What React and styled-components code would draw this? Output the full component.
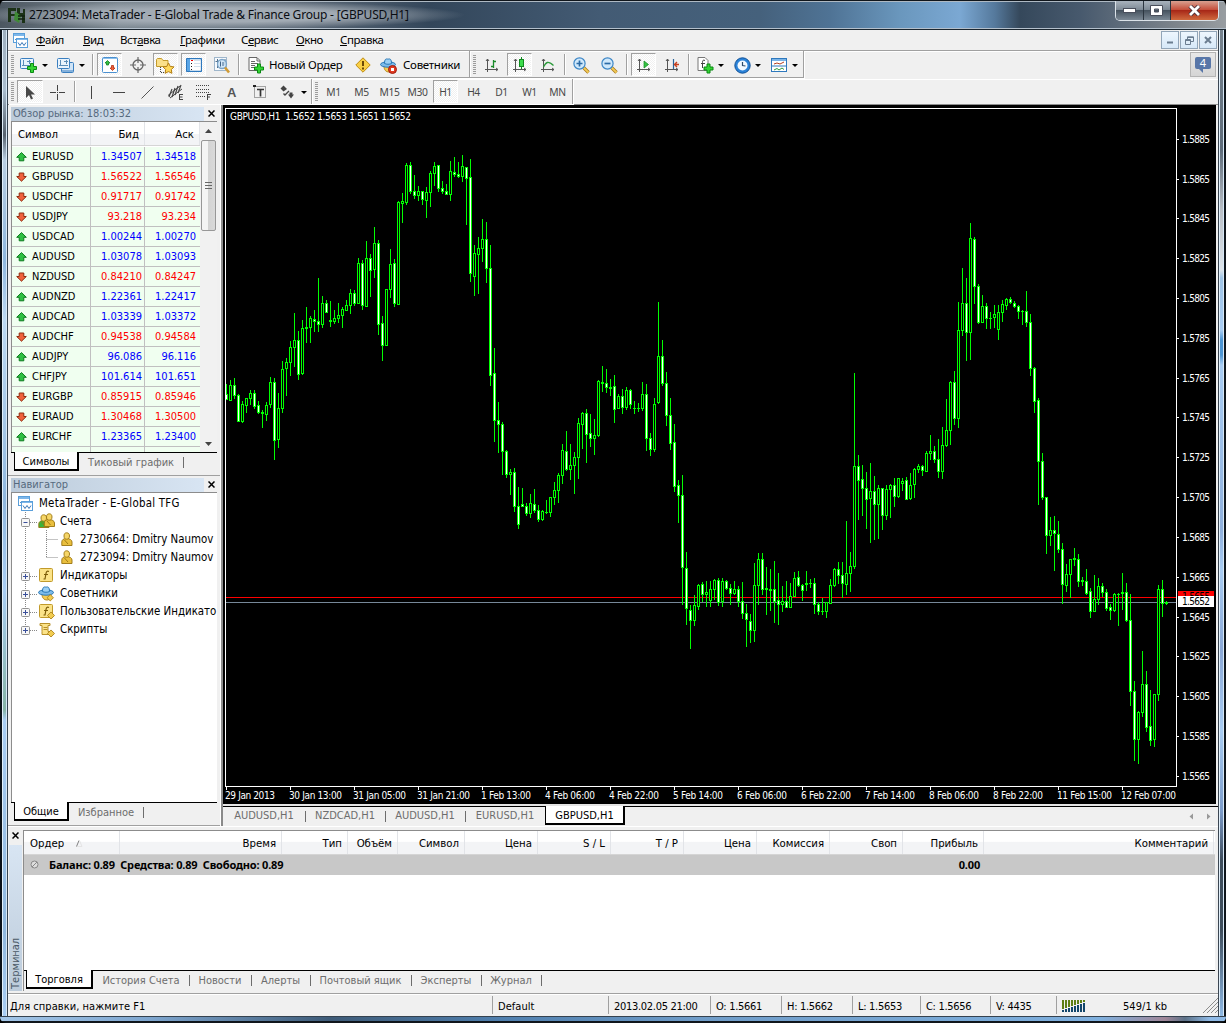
import styled, { createGlobalStyle } from 'styled-components';

const ui = '"DejaVu Sans Condensed", "Noto Sans", sans-serif';
const segoe = '"Noto Sans", "Open Sans", sans-serif';

const GlobalStyle = createGlobalStyle`
    * { box-sizing: border-box; }
    html, body { margin: 0; padding: 0; background: #000; overflow: hidden; }
    body { font-family: ${ui}; font-size: 11px; color: #000; line-height: 1; white-space: nowrap; }
    svg { display: block; flex: none; }
`;

/* ---------- data ---------- */

const quotes = [
    ['EURUSD', '1.34507', '1.34518', true],
    ['GBPUSD', '1.56522', '1.56546', false],
    ['USDCHF', '0.91717', '0.91742', false],
    ['USDJPY', '93.218', '93.234', false],
    ['USDCAD', '1.00244', '1.00270', true],
    ['AUDUSD', '1.03078', '1.03093', true],
    ['NZDUSD', '0.84210', '0.84247', false],
    ['AUDNZD', '1.22361', '1.22417', true],
    ['AUDCAD', '1.03339', '1.03372', true],
    ['AUDCHF', '0.94538', '0.94584', false],
    ['AUDJPY', '96.086', '96.116', true],
    ['CHFJPY', '101.614', '101.651', true],
    ['EURGBP', '0.85915', '0.85946', false],
    ['EURAUD', '1.30468', '1.30500', false],
    ['EURCHF', '1.23365', '1.23400', true],
];

// candles: high, body top, body bottom, low (thirds of a pixel from base), w = bearish
const series = [
    { base: 150, bars: `702,732,750,750w 690,705,753,753 684,705,738,747w 732,735,816,816w 753,762,816,819 744,744,768,789
720,729,747,765 720,729,771,777w 753,765,789,792w 780,786,792,834 756,765,795,813 681,696,765,774 684,696,873,930w
729,774,870,894 633,657,777,789 624,636,657,738 573,591,639,678 489,570,594,651 543,570,675,690w 510,534,672,675
471,531,537,579 498,504,534,579 480,507,516,546w 384,513,525,546w 438,459,525,534 450,459,489,489w 453,510,516,531
480,504,516,522 459,495,507,519 471,477,498,534 450,465,483,483 417,429,468,492 420,429,462,468w 324,339,462,462
330,339,468,480w 273,324,471,471 312,324,363,441w 231,279,360,384 270,279,525,555w 498,519,588,633w 417,417,588,588
297,342,420,444 327,339,462,471w 153,156,465,465 129,153,162,219 39,45,159,165 36,45,126,132w 75,123,138,147w
108,123,138,153 123,123,150,165w 111,126,153,204 63,69,129,171 36,48,72,108 45,45,117,126w 93,114,126,132w
102,123,135,135w 33,63,135,153 21,66,75,81w 36,72,81,84w 15,48,81,96 51,51,87,225w 27,81,372,396w 285,309,381,438
261,294,315,432 207,267,297,336 216,267,357,399w 285,354,678,708w 594,669,813,876w 756,810,825,909w` },
    { base: 290, bars: `396,402,486,555w 480,483,555,564w 537,546,555,615 534,546,651,666w 591,648,705,717w 594,642,651,651w
639,648,672,678w 612,639,672,684 597,642,663,669w 645,660,690,696w 660,663,690,693 630,666,669,672 621,621,669,681
576,600,624,645 549,555,603,639 462,480,558,582 423,483,540,543w 462,525,540,570 486,501,528,612 384,399,504,567
366,369,405,477 357,369,435,519w 372,429,447,471w 387,435,447,495 270,273,438,441 228,276,282,306 237,279,294,309w
267,291,297,318 255,288,360,399w 312,318,357,357 297,318,354,372w 291,300,354,360 297,300,345,357w 333,354,357,372
339,354,357,366 276,312,357,363 282,312,447,483w 429,444,480,498w 324,342,480,486 36,198,339,342 150,198,282,288w
246,279,378,408w 324,375,462,480w 402,456,591,606w 570,585,618,699w 555,615,834,945w 786,834,957,1005w
945,960,993,1077w 915,945,993,1008 882,885,951,960 876,882,915,936w 873,906,915,951 873,897,933,951 867,870,900,930
864,870,939,948w 864,873,936,951 870,873,897,900w 882,894,912,945w 873,897,912,915 888,897,936,951w 876,933,972,987w
942,969,990,1071w 972,993,1023,1059w 819,885,1023,1056` },
    { base: 360, bars: `579,597,678,735 579,597,690,705w 621,684,690,765 627,687,693,753 603,687,726,789w 639,720,735,795w
678,723,735,756 663,723,744,744w 669,708,744,744 636,654,711,711 633,651,678,681w 672,675,693,723w 633,669,675,693
657,669,672,684 654,669,735,762w 726,732,756,765w 714,753,756,765 726,726,756,774 657,675,732,732 624,627,678,681
606,627,648,672w 606,645,672,714w 483,639,675,705 576,618,642,696 39,318,621,627 285,318,363,480w 315,357,387,468w
336,384,420,507w 309,393,417,549 348,393,435,540w 375,384,435,537 384,384,468,510w 375,387,468,480 372,375,390,474
354,375,411,441w 354,354,411,414 354,363,372,393 351,360,420,420w 339,375,417,420 324,327,375,414 312,318,330,339
315,318,333,348w 273,279,336,336 225,273,282,300 258,273,300,309w 237,297,336,354w 201,255,336,357 117,210,258,261
63,66,213,255 33,66,177,195w` },
    { base: 210, bars: `276,360,627,654 174,279,363,378 204,279,369,453w 39,84,369,450 81,87,231,282w 222,228,339,342w
255,288,339,339 279,288,327,357w 306,324,327,357 285,312,324,354 285,306,360,390 270,282,309,336 264,267,288,300
261,267,279,282w 273,279,291,294w 285,288,306,327w 300,303,306,345 243,303,339,351w 312,336,477,498w 471,474,576,609w
564,570,756,885w 729,753,864,870w 861,861,978,1032w 921,960,978,1008 918,960,972,1083w 933,972,1020,1029w` },
    { base: 520, bars: `69,87,195,252w 132,162,198,216 117,117,165,234 84,114,120,138 102,117,186,201w 171,180,186,198
147,183,222,225w 204,213,276,294w 165,237,276,276 174,198,240,255 189,198,219,231w 207,216,267,273w 252,261,273,300w
219,222,273,276 219,222,225,318 159,216,222,270 189,216,303,306w 222,300,516,558w 483,513,660,723w 573,576,660,732
393,492,579,591 453,492,624,636w 510,618,663,678w 522,522,660,681 195,207,525,543 180,207,252,291w 243,246,252,255` },
];

const candles = series.flatMap(({ base, bars }) =>
    bars.split(/\s+/).map((bar) => {
        const [high, top, bottom, low] = bar.replace('w', '').split(',').map((v) => base + Math.round(v / 3));
        return { high, top, bottom, low, bear: bar.endsWith('w') };
    })
);

const prices = ['1.5885', '1.5865', '1.5845', '1.5825', '1.5805', '1.5785', '1.5765', '1.5745', '1.5725',
    '1.5705', '1.5685', '1.5665', '1.5645', '1.5625', '1.5605', '1.5585', '1.5565'];

const times = [['29 Jan 2013', 50], ['30 Jan 13:00', 53], ['31 Jan 05:00', 53], ['31 Jan 21:00', 53], ['1 Feb 13:00', 50],
    ['4 Feb 06:00', 50], ['4 Feb 22:00', 50], ['5 Feb 14:00', 50], ['6 Feb 06:00', 50], ['6 Feb 22:00', 50],
    ['7 Feb 14:00', 50], ['8 Feb 06:00', 50], ['8 Feb 22:00', 50], ['11 Feb 15:00', 55], ['12 Feb 07:00', 55]];

const columns = [['Ордер', 96], ['Время', 162], ['Тип', 66], ['Объём', 50], ['Символ', 67], ['Цена', 73], ['S / L', 73],
    ['T / P', 73], ['Цена', 73], ['Комиссия', 73], ['Своп', 73], ['Прибыль', 81], ['Комментарий', 230]];

/* ---------- icons ---------- */

const Svg = ({ w = 17, h = 17, children }) => (
    <svg width={w} height={h} viewBox={`0 0 ${w} ${h}`} fill="none">{children}</svg>
);

const Plus = ({ x, y }) => (
    <path transform={`translate(${x} ${y})`} d="M3.5.5h3v3h3v3h-3v3h-3v-3h-3v-3h3z" fill="#35d535" stroke="#0a8a12" />
);

const Axes = () => (
    <path d="M3.5 2v13M1 12.5h13M2 4l1.500-2L5 4M12 11l2 1.500L12 14" stroke="#555" />
);

const Coin = ({ x, y, s = 5 }) => (
    <rect x={x} y={y} width={s} height={s} transform={`rotate(45 ${x + s / 2} ${y + s / 2})`} fill="#f2cc50" stroke="#a97e17" strokeWidth=".8" />
);

const NewChartIcon = () => (
    <Svg w={18}>
        <rect x=".5" y="1.500" width="13" height="10" rx="1" fill="#e8f3fd" stroke="#3a7fc0" />
        <path d="M3.500 3v6M2 8.500h9M9.500 3v4M7 4.500h4" stroke="#5b8db8" />
        <Plus x={7} y={6} />
    </Svg>
);

const ProfilesIcon = () => (
    <Svg w={18}>
        <rect x="4.500" y="5.500" width="12" height="10" rx="1" fill="#cfe4f7" stroke="#3a7fc0" />
        <rect x=".5" y="1.500" width="12" height="10" rx="1" fill="#e8f3fd" stroke="#3a7fc0" />
        <path d="M3.500 3v6M2 8.500h9M9.500 3v4M7 4.500h4" stroke="#5b8db8" />
        <path d="M5 14h11" stroke="#3a7fc0" />
    </Svg>
);

const WatchIcon = () => (
    <Svg w={16} h={16}>
        <rect x=".5" y=".5" width="15" height="15" rx="1" fill="#fff" stroke="#4a90d0" />
        <path d="M1 1.500h14" stroke="#8cc0ec" />
        <path d="M5.500 3.500L8 6H6.500v2h-2V6H3z" fill="#35c043" stroke="#0f8420" strokeWidth=".8" />
        <path d="M10.500 13.500L13 11h-1.500V8.500h-2V11H8z" fill="#f0623c" stroke="#b32d10" strokeWidth=".8" />
    </Svg>
);

const TargetIcon = () => (
    <Svg w={16} h={16}>
        <circle cx="8" cy="8" r="5" stroke="#666" strokeWidth="1.300" />
        <path d="M8 0v6M8 10v6M0 8h6M10 8h6" stroke="#666" strokeWidth="1.200" />
    </Svg>
);

const NavigatorIcon = () => (
    <Svg w={19}>
        <path d="M.5 2.500l1-1h4l1.500 2h5v6H.5z" fill="#fbe08a" stroke="#c39a2b" />
        <path d="M4.500 10v5.500H9" stroke="#444" strokeDasharray="1 1" />
        <path d="M12.500 6l1.700 3.400 3.800.5-2.700 2.700.6 3.700-3.400-1.700-3.400 1.700.6-3.700L7 9.900l3.800-.5z" fill="#ffd95c" stroke="#b27d12" />
    </Svg>
);

const TerminalIcon = () => (
    <Svg w={16} h={14}>
        <rect x=".5" y=".5" width="15" height="13" rx="1" fill="#fff" stroke="#2e78bd" strokeWidth="1.300" />
        <rect x="1" y="1" width="3" height="12" fill="#5aa5e6" />
        <path d="M5 2.500h2" stroke="#e00" />
        <path d="M5 5.500h1M5 8.500h1M5 11.500h1" stroke="#222" />
        <path d="M8 2.500h7M8 5.500h7M8 8.500h7" stroke="#d3e0ec" />
    </Svg>
);

const TesterIcon = () => (
    <Svg>
        <rect x="1.500" y=".5" width="12" height="13" fill="#f7fafd" stroke="#9fb6cb" />
        <path d="M4.500 2v9M2.500 4.500h3M12 2v6" stroke="#54718c" />
        <circle cx="9" cy="7" r="4.500" fill="#c9e3f8cc" stroke="#7ba4c8" strokeWidth="1.300" />
        <path d="M7.500 4.500v5M10 5v4" stroke="#40658a" />
        <path d="M12 10.500l4 5" stroke="#d19b35" strokeWidth="2.600" />
    </Svg>
);

const OrderIcon = () => (
    <Svg w={16}>
        <path d="M1 .5h8l3 3v10H1z" fill="#fff" stroke="#666" />
        <path d="M9 1v3h3M3 4.500h4M3 6.500h7M3 8.500h4M3 10.500h3" stroke="#666" />
        <Plus x={6} y={6.500} />
    </Svg>
);

const AlertIcon = () => (
    <Svg w={16} h={16}>
        <path d="M8 .8L15.200 8 8 15.200.8 8z" fill="#f9cf45" stroke="#bf8d14" strokeLinejoin="round" />
        <path d="M8 4v5M8 10.500v2" stroke="#5d3b00" strokeWidth="1.800" />
    </Svg>
);

const ExpertIcon = ({ stop }) => (
    <Svg>
        <path d="M4 9c0 4 2 6 5 6s4-3 4-6z" fill="#f4cb52" stroke="#b78b22" />
        <ellipse cx="8" cy="7.500" rx="7.500" ry="2.700" fill="#7cbbea" stroke="#2b78b6" />
        <path d="M4.500 6.500C4.500 2 6 1.500 8 2.200c2-.7 3.500-.2 3.500 4.300-2 1-5 1-7 0z" fill="#9ad0f5" stroke="#2b78b6" />
        {stop && <><circle cx="12.500" cy="12.500" r="4" fill="#e03a22" stroke="#a31c0c" /><rect x="11" y="11" width="3" height="3" fill="#fff" /></>}
        {!stop && <Coin x={10} y={10.500} s={4.500} />}
    </Svg>
);

const BarsIcon = () => <Svg w={16}><Axes /><path d="M9.500 3v8M9 4.500h3M7 9.500h3" stroke="#1a8a2a" strokeWidth="1.300" /></Svg>;
const CandleIcon = () => (
    <Svg w={16}><Axes /><path d="M9.500 0v12" stroke="#118a20" /><rect x="7.500" y="2.500" width="4" height="7" fill="#3ddc4c" stroke="#118a20" /></Svg>
);
const LineIcon = () => <Svg w={16}><Axes /><path d="M3.500 10C6 5 8 3.500 13.500 8.500" stroke="#2b9a3a" strokeWidth="1.300" /></Svg>;
const ScrollIcon = () => <Svg w={16}><Axes /><path d="M8 4l4.500 3.500L8 11z" fill="#32c241" stroke="#118a20" strokeWidth=".7" /></Svg>;
const ShiftIcon = () => <Svg w={16}><Axes /><path d="M9.500 2v10" stroke="#28639a" strokeWidth="1.200" /><path d="M15 7.500h-4M13 5l-2.500 2.500L13 10" stroke="#c8401e" strokeWidth="1.400" /></Svg>;

const ZoomIcon = ({ plus }) => (
    <Svg>
        <path d="M10.500 10.500l5 5" stroke="#a8781c" strokeWidth="3.400" />
        <path d="M10.500 10.500l5 5" stroke="#f2ca55" strokeWidth="1.800" />
        <circle cx="6.500" cy="6.500" r="5.600" fill="#cfe8fb" stroke="#3c86c6" strokeWidth="1.200" />
        <path d={plus ? 'M3.500 6.500h6M6.500 3.500v6' : 'M3.500 6.500h6'} stroke="#2b6ba6" strokeWidth="1.700" />
    </Svg>
);

const IndicatorIcon = () => (
    <Svg>
        <path d="M1 .5h7l3 3v10H1z" fill="#fff" stroke="#777" />
        <path d="M8 3.500c-2-1-2.500 0-2.500 2V11M4 6.500h4" stroke="#444" />
        <Plus x={6.500} y={6.500} />
    </Svg>
);

const ClockIcon = () => (
    <Svg>
        <circle cx="8.500" cy="8.500" r="7.700" fill="#2a82d8" stroke="#125398" />
        <circle cx="8.500" cy="8.500" r="5" fill="#f2f9ff" />
        <path d="M8.500 5v3.500l3 .5" stroke="#2c4c6c" strokeWidth="1.200" />
    </Svg>
);

const TemplateIcon = () => (
    <Svg h={15}>
        <rect x=".5" y=".5" width="15" height="13" fill="#fff" stroke="#2e78bd" />
        <path d="M1 2h14" stroke="#7ab4e8" strokeWidth="2" />
        <path d="M1 8h14" stroke="#2e78bd" />
        <path d="M3 6l3-1 3 1 4-2" stroke="#b5401f" />
        <path d="M3 12l3-1.500 2 1.500 3-2 2 1.500" stroke="#2b9a3a" />
    </Svg>
);

const CursorIcon = () => <Svg w={12} h={15}><path d="M2 1v12l3-3 2 4.500 2-1-2-4h4z" fill="#484848" /></Svg>;
const CrossIcon = () => <Svg w={15} h={15}><path d="M7.500 0v6M7.500 9v6M0 7.500h6M9 7.500h6M7 7.500h1" stroke="#444" /></Svg>;
const VLineIcon = () => <Svg w={3} h={13}><path d="M1.500 0v13" stroke="#444" /></Svg>;
const HLineIcon = () => <Svg w={13} h={3}><path d="M0 1.500h12" stroke="#444" /></Svg>;
const TrendIcon = () => <Svg w={13} h={13}><path d="M.5 12.500l12-12" stroke="#555" /></Svg>;
const ChannelIcon = () => (
    <Svg w={18} h={16}>
        <path d="M1 11.500L13 2M3 14L15 5" stroke="#444" />
        <path d="M2 13l3-8M5 13l3-9M8 11l3-9M11 9l3-8" stroke="#444" strokeWidth="1.200" />
        <path d="M12.500 10v6M12 10.500h4M12 13h3.500M12 15.500h4" stroke="#444" />
    </Svg>
);
const FiboIcon = () => (
    <Svg w={16} h={16}>
        <path d="M0 1.500h14M0 5.500h14M0 8.500h14M0 12.500h9" stroke="#444" strokeDasharray="1 1" />
        <path d="M11.500 10v6M11 10.500h4M11 13h3" stroke="#444" />
    </Svg>
);
const LabelIcon = () => (
    <Svg w={14} h={14}>
        <rect x="1.500" y="1.500" width="11" height="11" stroke="#555" strokeDasharray="1 1" />
        <path d="M0 1h3" stroke="#222" strokeWidth="2" />
        <path d="M4 4.500h7M7.500 4.500v7" stroke="#333" strokeWidth="1.700" />
    </Svg>
);
const ArrowsIcon = () => (
    <Svg w={15} h={14}>
        <path d="M3.500.5L7 4 3.500 6.500.5 3.500z" fill="#444" />
        <path d="M3.500 8.500l1.500 1.500 4-4" stroke="#444" strokeWidth="1.400" />
        <path d="M8 9.500h6L11 13.500zM9.500 7.500h3v2h-3z" fill="#444" />
    </Svg>
);

const AppIcon = () => (
    <Svg w={18} h={18}>
        <path d="M0 1h8v3H3v3h4v2H3v6H0zM9 1h3v5h3V2h2v14h-3V9H9z" fill="#1c3217" />
        <path d="M7 4l6 5-2 7-5-3z" fill="#3f8a36" /><path d="M10 9h7M10 12h7" stroke="#102010" strokeWidth="1.500" />
    </Svg>
);

const MetaIcon = () => (
    <Svg w={15} h={15}>
        <rect x=".5" y=".5" width="11" height="9" fill="#fff" stroke="#5a9fda" />
        <path d="M1 2h10" stroke="#7db7ea" strokeWidth="2" />
        <path d="M2 6.500h1M4 5.500h1M6 6.500h1" stroke="#4a8ccc" />
        <rect x="3.500" y="5.500" width="11" height="9" fill="#fff" stroke="#5a9fda" />
        <path d="M4 6.500h10" stroke="#7db7ea" />
        <path d="M5 9.500l2 3 2-3 2 3 2-3" stroke="#3a78b8" />
    </Svg>
);

const QuoteArrow = ({ up }) => (
    <svg width="11" height="10" viewBox="0 0 11 10">
        <path d={up ? 'M5.500.6l4.800 4.700H7.800v3.500H3.200V5.300H.7z' : 'M5.500 9.200L.7 4.500h2.500V1h4.600v3.500h2.500z'}
            fill={up ? '#2fc043' : '#f0623c'} stroke={up ? '#0c7a1d' : '#8e2c10'} strokeWidth="1" />
    </svg>
);

const Person = ({ x = 0, y = 0, body = '#e9bf3e' }) => (
    <g transform={`translate(${x} ${y})`} stroke="#9a7410" strokeWidth=".9">
        <path d="M.8 13.500V10c0-2 1.500-3.500 4.700-3.500S11 8 11 10v3.500z" fill={body} />
        <path d="M3 4c0-2 .8-3.200 2.700-3.200S8.500 2 8.500 4 7.500 7.200 5.700 7.200 3 6 3 4z" fill="#f6d668" />
        <path d="M3.500 8l3.500 4" />
    </g>
);

const AccountsIcon = () => <Svg w={18} h={16}><Person x={0} y={1} body="#3db33a" /><Person x={5.500} y={0} /></Svg>;
const AccountIcon = () => <Svg w={12} h={15}><Person /></Svg>;
const FuncIcon = ({ coin }) => (
    <Svg w={16} h={15}>
        <rect x=".5" y=".5" width="13" height="13" rx="1" fill="#fbe389" stroke="#c19a2a" />
        <path d="M10 3.500c-2-.8-2.700 0-3 2L6 11H4.500M5 6.500h4" stroke="#7c5c08" strokeWidth="1.200" />
        {coin && <Coin x={9.500} y={9} />}
    </Svg>
);
const ScriptIcon = () => (
    <Svg w={16} h={15}>
        <path d="M1 1.500h10v2H9v6h2v3H3v-3H3v-6H1z" fill="#fbe389" stroke="#b8912a" />
        <path d="M4.500 5.500h4M4.500 7.500h4" stroke="#b8912a" /><Coin x={9.500} y={9} />
    </Svg>
);

const TrafficIcon = () => (
    <svg width="24" height="12" viewBox="0 0 24 12" shapeRendering="crispEdges">
        {[0, 1, 2, 3, 4, 5, 6, 7].map((i) => (
            <g key={i}>
                <rect x={i * 3} y="0" width="2" height={9 - i} fill="#5d7f14" />
                <rect x={i * 3} y={10 - i} width="2" height={2 + i} fill="#12466b" />
            </g>
        ))}
    </svg>
);

const Close = () => <Svg w={7} h={7}><path d="M.5 .5l6 6M6.500 .5l-6 6" stroke="#000" strokeWidth="1.500" /></Svg>;

/* ---------- window ---------- */

const Window = styled.div`
    width: 1226px;
    height: 1023px;
    display: flex;
    flex-direction: column;
    border-radius: 6px;
    overflow: hidden;
`;

const TitleBar = styled.div`
    height: 30px;
    flex: none;
    display: flex;
    align-items: flex-start;
    padding-left: 8px;
    border-top: 1px solid #10161c;
    border-bottom: 1px solid #1c2730;
    box-shadow: inset 0 1px 0 #aeb9c3, inset 0 -1px 0 #b4c0cc;
    background: radial-gradient(ellipse 250px 14px at 215px 14px, #a2abb4 50%, #a2abb400 100%),
        linear-gradient(90deg, #4c5761 0, #7d8992 120px, #5d6a78 300px, #33465a 430px, #435b74 600px, #45617c 760px,
            #4f7395 830px, #6a97bd 900px, #7ba8d3 960px, #55799c 995px, #35485b 1020px, #47596d 1080px, #7f868d 1180px, #989da1 1226px);
`;

const Caption = styled.div`
    flex: 1;
    padding: 7px 0 0 3px;
    font: 12px/14px ${segoe};
    letter-spacing: -0.2px;
    color: #0a0d12;
`;

const AppIconBox = styled.div`padding-top: 6px;`;

const WinButtons = styled.div`
    display: flex;
    width: 104px;
    height: 20px;
    margin-right: 7px;
    border: 1px solid #dbe2e8;
    border-top: 0;
    border-radius: 0 0 5px 5px;
    overflow: hidden;
`;

const WinButton = styled.div`
    flex: ${(p) => (p.$close ? '0 0 47px' : '1')};
    display: flex;
    align-items: center;
    justify-content: center;
    border-right: ${(p) => (p.$close ? '0' : '1px solid #2c3640')};
    background: ${(p) => (p.$close
        ? 'linear-gradient(#d9a090, #c6503c 45%, #a82818 50%, #d06a3e)'
        : 'linear-gradient(#a9b3bd, #7e8a96 45%, #46535f 50%, #7b8894)')};
`;

const Body = styled.div`
    flex: 1;
    min-height: 0;
    display: flex;
`;

const Frame = styled.div`
    width: 8px;
    flex: none;
    border-left: ${(p) => (p.$right ? '1px solid #3c4753' : '2px solid #0b1118')};
    border-right: ${(p) => (p.$right ? '2px solid #10161c' : '1px solid #35424f')};
    box-shadow: inset 1px 0 0 #e2f0fb, inset -1px 0 0 #d7e8f7;
    background: ${(p) => (p.$right
        ? 'linear-gradient(#76828d 0, #5e6c7a 120px, #b9bfc6 180px, #dde4ea 240px, #9fc4e6 248px, #a9cdf3 300px, #4d96d4 310px, #4d96d4 325px, #a9cdf3 335px, #8fb0dc 500px, #a9cdf3 540px, #8aa8d6 620px, #a9cdf3 700px, #7d9dcb 780px, #3e4d5c 830px, #3e4d5c 900px, #8fbae6 986px)'
        : 'linear-gradient(#9fb0bf 0, #a9bccd 60px, #56626e 105px, #b9cee2 130px, #8fb7dd 230px, #bcd8f2 290px, #a4c6e6 400px, #8fb7dd 470px, #a9cdf3 560px, #86b3a6 680px, #a9cdf3 690px, #8fb7dd 900px, #a9cdf3 986px)')};
`;

const BottomFrame = styled.div`
    height: 7px;
    flex: none;
    border-top: 1px solid #35424f;
    border-bottom: 2px solid #10161c;
    background: linear-gradient(90deg, #a3c6e8 0, #7ea6cf 150px, #3e5b78 330px, #4f7fae 500px, #6f9cc8 700px, #7fb0de 1100px, #a08698 1165px, #5d7288 1185px, #8fbae6 1210px);
`;

const Client = styled.div`
    width: 1210px;
    background: #f0f0f0;
    display: flex;
    flex-direction: column;
    overflow: hidden;
`;

const MenuBar = styled.div`
    height: 21px;
    display: flex;
    align-items: center;
    padding-left: 5px;
    border-bottom: 1px solid #a0a0a0;
`;

const MenuItem = styled.div`
    width: ${(p) => p.$w}px;
    font: 11.5px/14px ${segoe};
    letter-spacing: -0.45px;
    u { text-underline-offset: 1px; }
`;

const MdiButton = styled.div`
    width: 18px;
    height: 18px;
    margin-right: 1px;
    display: flex;
    align-items: center;
    justify-content: center;
    border: 1px solid #92a5b8;
    background: linear-gradient(#eef6fd, #d6e8f8);
`;

const Spacer = styled.div`flex: 1;`;

/* ---------- toolbars ---------- */

const ToolRow = styled.div`
    display: flex;
    height: ${(p) => p.$h}px;
    box-shadow: inset 0 1px 0 #fff;
    border-bottom: ${(p) => (p.$last ? '1px solid #8e8e8e' : '0')};
`;

const ToolBar = styled.div`
    display: flex;
    height: ${(p) => (p.$last ? 25 : 27)}px;
    padding: ${(p) => (p.$last ? 1 : 2)}px 0 0;
    border-right: 1px solid #a0a0a0;
    border-bottom: ${(p) => (p.$last ? '0' : '1px solid #a0a0a0')};
    box-shadow: 1px 1px 0 #fff, inset 0 1px 0 #fff;
`;

const Grip = styled.div`
    width: 8px;
    margin: 2px 0 3px;
    border: solid transparent;
    border-width: 0 2px 0 3px;
    background: repeating-linear-gradient(#9c9c9c 0 1px, #f0f0f0 1px 2px) padding-box;
`;

const Tool = styled.div`
    width: ${(p) => p.$w || 25}px;
    height: 23px;
    padding-top: 1px;
    margin-left: ${(p) => p.$ml || 0}px;
    flex: none;
    display: flex;
    align-items: center;
    justify-content: center;
    border: 1px solid transparent;
    font: 10.3px ${segoe};
    letter-spacing: -0.45px;
    color: #484848;
    ${(p) => p.$pressed && `
        border-color: #a0a0a0 #fff #fff #a0a0a0;
        background: repeating-conic-gradient(#fff 0 25%, #f0f0f0 0 50%) 0 0 / 2px 2px;
    `}
`;

const TextTool = styled.div`
    width: ${(p) => p.$w}px;
    height: 23px;
    padding: 1px 0 0 ${(p) => p.$pl}px;
    display: flex;
    align-items: center;
    gap: ${(p) => p.$gap}px;
    font: 11.5px/14px ${segoe};
    letter-spacing: -0.28px;
`;

const Caret = styled.div`
    width: 7px;
    height: 23px;
    padding-top: 2px;
    display: flex;
    align-items: center;
    justify-content: center;
    &::after {
        content: '';
        border: solid transparent;
        border-width: 3px 3px 0;
        border-top-color: #000;
    }
`;

const Sep = styled.div`
    width: 1px;
    height: 21px;
    margin: 1px ${(p) => p.$r || 4}px 0 ${(p) => p.$l || 4}px;
    background: #a0a0a0;
    box-shadow: 1px 0 0 #fff;
`;

const Glyph = styled.span`
    font: bold 13px "Liberation Sans", sans-serif;
    color: #555;
`;

const NewsButton = styled.div`
    width: 26px;
    height: 25px;
    margin: 1px 2px 0 0;
    display: flex;
    justify-content: center;
    padding-top: 4px;
    border: 1px solid #b4b4b4;
    background: linear-gradient(#e8e8e8, #d5d5d5);
`;

const NewsBadge = styled.div`
    position: relative;
    width: 16px;
    height: 12px;
    border-radius: 2px;
    background: #5876a8;
    color: #fff;
    text-align: center;
    font: 11px/12px ${segoe};
    &::after {
        content: '';
        position: absolute;
        left: 4px;
        top: 12px;
        border: solid transparent;
        border-width: 0 0 4px 4px;
        border-right: 0;
        border-top: 4px solid #5876a8;
        border-bottom: 0;
    }
`;

/* ---------- docks ---------- */

const Workspace = styled.div`
    height: 721px;
    display: flex;
`;

const Dock = styled.div`
    width: 213px;
    flex: none;
    display: flex;
    flex-direction: column;
    border-right: 1px solid #fff;
`;

const Panel = styled.div`
    height: ${(p) => p.$h}px;
    padding: 1px 3px 0;
    display: flex;
    flex-direction: column;
    border-bottom: 1px solid #a0a0a0;
`;

const PanelTitle = styled.div`
    height: 15px;
    display: flex;
    align-items: center;
    justify-content: space-between;
    padding-right: 2px;
`;

const PanelName = styled.div`
    width: 193px;
    padding-left: 2px;
    font: 11px/14px ${ui};
    color: #566a7e;
    background: linear-gradient(90deg, #bccbda, #d8e5f3);
`;

const Sheet = styled.div`
    flex: 1;
    min-height: 0;
    overflow: hidden;
    display: flex;
    background: #fff;
    border: solid #8c8c8c;
    border-width: 1px 0 0 1px;
`;

const QuoteTable = styled.div`
    width: 188px;
    overflow: hidden;
`;

const QuoteHead = styled.div`
    height: 24px;
    margin-bottom: 1px;
    display: grid;
    grid-template-columns: 79px 54px 55px;
    font-size: 11.3px;
    background: linear-gradient(#fff 50%, #f3f4f6 50%);
    border-bottom: 1px solid #d5d5d5;
    div {
        padding: 7px 5px 0 6px;
        text-align: right;
        border-right: 1px solid #e2e4e8;
        &:first-child { text-align: left; }
    }
`;

const QuoteRow = styled.div`
    height: 20px;
    display: grid;
    grid-template-columns: 79px 54px 55px;
    background: #f0fff0;
    border-bottom: 1px solid #c0c0c0;
`;

const QuoteCell = styled.div`
    display: flex;
    align-items: center;
    justify-content: ${(p) => (p.$symbol ? 'flex-start' : 'flex-end')};
    gap: 5px;
    padding: 0 ${(p) => (p.$last ? 4 : 2)}px 0 ${(p) => (p.$symbol ? 4 : 0)}px;
    border-right: ${(p) => (p.$last ? '0' : '1px solid #c0c0c0')};
    color: ${(p) => p.$color || '#000'};
`;

const ScrollBar = styled.div`
    width: 17px;
    display: flex;
    flex-direction: column;
    align-items: center;
    background: #f1f1f1;
    padding: 7px 0 6px;
`;

const ScrollThumb = styled.div`
    width: 15px;
    height: 91px;
    margin: 7px 0 auto;
    display: flex;
    align-items: center;
    justify-content: center;
    border: 1px solid #979797;
    border-radius: 2px;
    background: linear-gradient(90deg, #f4f4f4 45%, #d3d3d3 50%, #d9d9d9);
`;

const TabBar = styled.div`
    height: ${(p) => p.$h}px;
    padding-left: ${(p) => p.$pl}px;
    display: flex;
    align-items: flex-start;
    border-top: 1px solid #000;
    background: #f0f0f0;
`;

const Tab = styled.div`
    width: ${(p) => p.$w}px;
    height: 18px;
    margin-top: -1px;
    padding-top: ${(p) => (p.$chart ? 0 : 2)}px;
    display: flex;
    align-items: center;
    justify-content: center;
    color: #6d6d6d;
    ${(p) => p.$active && `
        padding-top: 2px;
        color: #000;
        background: #fff;
        border: solid #000;
        border-width: 0 2px 2px 1px;
        height: 19px;
    `}
`;

const TabMark = styled.div`
    width: 1px;
    height: 11px;
    margin: 4px -1px 0 0;
    background: #6d6d6d;
`;

const Tree = styled.div`
    flex: 1;
    padding-top: 1px;
    overflow: hidden;
`;

const TreeRow = styled.div`
    height: 18px;
    display: flex;
    align-items: center;
    padding-left: ${(p) => (p.$root ? 6 : 9)}px;
    font-size: 11.400px;
    letter-spacing: ${(p) => (p.$root ? 0.25 : 0)}px;
`;

const TreeText = styled.span`padding-top: 2px;`;

const TreeIcon = styled.div`
    width: ${(p) => p.$w}px;
    flex: none;
    display: flex;
    padding-left: ${(p) => p.$pl || 0}px;
`;

const Branch = ({ open, last }) => (
    <svg width="17" height="18" viewBox="0 0 17 18" fill="none">
        <path d={`M4.500 0v${last ? 9 : 18}M9 10.500h7`} stroke="#888" strokeDasharray="1 1" />
        <rect x=".5" y="6.500" width="8" height="8" rx="1" fill="#f7f7f7" stroke="#919191" />
        <path d={open ? 'M2.500 10.500h4' : 'M2 10.500h5M4.500 8v5'} stroke="#3a4f9a" />
    </svg>
);

const Leaf = ({ last }) => (
    <svg width="38" height="18" viewBox="0 0 38 18" fill="none">
        <path d={`M4.500 0v18M25.500 0v${last ? 9 : 18}M25.500 9.500h12`} stroke="#888" strokeDasharray="1 1" />
    </svg>
);

/* ---------- chart ---------- */

const ChartPane = styled.div`
    flex: 1;
    display: flex;
    flex-direction: column;
    border: solid #8a8a8a;
    border-width: 0 0 0 2px;
`;

const ChartView = styled.div`
    height: 701px;
    border: solid #000;
    border-width: 0;
    border-right: 2px solid #f0f0f0;
    border-bottom: 2px solid #e4e4e4;
    background: #000;
    overflow: hidden;
`;

const Chart = () => (
    <svg width="993" height="699" viewBox="223 105 993 699" shapeRendering="crispEdges" fontFamily={ui} fontSize="10">
        <defs><clipPath id="plot"><rect x="226" y="109" width="950" height="677" /></clipPath></defs>
        <g clipPath="url(#plot)">
            <rect x="226" y="597" width="950" height="1" fill="#f00" />
            <rect x="226" y="602" width="950" height="1" fill="#778899" />
            {candles.map((c, i) => {
                const x = 226 + i * 4;
                return (
                    <g key={i}>
                        <rect x={x} y={c.high} width="1" height={c.low - c.high} fill="#0f0" />
                        <rect x={x - 1} y={c.top} width="3" height={c.bottom - c.top} fill="#0f0" />
                        {c.bottom - c.top > 2 && (
                            <rect x={x} y={c.top + 1} width="1" height={c.bottom - c.top - 2} fill={c.bear ? '#fff' : '#000'} />
                        )}
                    </g>
                );
            })}
        </g>
        <path d="M225.500 786.500V108.500H1176.500V786.500Z" fill="none" stroke="#fff" />
        <text x="230" y="120" fill="#fff" textLength="181" style={{ whiteSpace: 'pre' }}>GBPUSD,H1  1.5652 1.5653 1.5651 1.5652</text>
        {prices.map((p, i) => {
            const y = Math.round(138.700 + i * 39.820);
            return (
                <g key={p} fill="#fff">
                    <rect x="1177" y={y} width="2" height="1" />
                    <text x="1182" y={y + 4} textLength="28">{p}</text>
                </g>
            );
        })}
        {/* ask tag sits partly under the bid tag */}
        <rect x="1178" y="591" width="36" height="6" fill="#f00" />
        <text x="1182" y="600" fill="#000" textLength="28">1.5655</text>
        <rect x="1178" y="596" width="36" height="11" fill="#fff" />
        <text x="1182" y="605" fill="#000" textLength="28">1.5652</text>
        {times.map(([t, w], i) => (
            <g key={t} fill="#fff">
                <rect x={226 + i * 64} y="787" width="1" height="3" />
                <text x={225 + i * 64} y="799" textLength={w}>{t}</text>
            </g>
        ))}
    </svg>
);

/* ---------- terminal ---------- */

const Terminal = styled.div`
    height: 168px;
    display: flex;
    padding: 3px 3px 3px 0;
    box-shadow: inset 0 1px 0 #fff, inset 0 -1px 0 #a0a0a0;
`;

const TerminalSide = styled.div`
    width: 15px;
    display: flex;
    flex-direction: column;
    align-items: center;
    padding: 3px 1px 0 0;
`;

const TerminalName = styled.div`
    flex: 1;
    width: 13px;
    margin-top: 6px;
    writing-mode: vertical-rl;
    transform: rotate(180deg);
    padding-top: 2px;
    font: 11px/13px ${ui};
    color: #4a5866;
    background: linear-gradient(#bccbda, #d8e5f3);
`;

const TerminalMain = styled.div`
    flex: 1;
    min-width: 0;
    display: flex;
    flex-direction: column;
    margin-top: 1px;
    border: solid #8c8c8c;
    border-width: 1px 0 0 1px;
    background: #fff;
`;

const OrderHead = styled.div`
    height: 24px;
    display: flex;
    font-size: 11.3px;
    background: linear-gradient(#fff 45%, #f3f4f6 50%);
    border-bottom: 1px solid #d5d5d5;
`;

const OrderCol = styled.div`
    width: ${(p) => p.$w}px;
    flex: none;
    padding: 7px 5px 0 6px;
    text-align: ${(p) => (p.$first ? 'left' : 'right')};
    border-right: 1px solid #e2e4e8;
    svg { display: inline-block; margin-left: 12px; }
`;

const BalanceRow = styled.div`
    height: 20px;
    display: flex;
    align-items: center;
    padding: 0 0 1px 6px;
    background: #c8c8c8;
    font-weight: bold;
    font-family: ${segoe};
    letter-spacing: -0.18px;
    white-space: pre;
    svg { margin-right: 10px; }
`;

const Profit = styled.div`
    margin-left: auto;
    padding-right: 235px;
`;

const OrderBody = styled.div`flex: 1;`;

const StatusBar = styled.div`
    height: 22px;
    display: flex;
    align-items: center;
    box-shadow: inset 0 1px 0 #fff;
`;

const StatusCell = styled.div`
    width: ${(p) => p.$w}px;
    height: 18px;
    display: flex;
    align-items: center;
    gap: 37px;
    padding: 2px 0 0 ${(p) => p.$pl || 5}px;
    border-left: ${(p) => (p.$first ? '0' : '1px solid #a0a0a0')};
    letter-spacing: ${(p) => (p.$num ? -0.3 : 0.05)}px;
`;

const Resize = () => (
    <svg width="15" height="15" viewBox="0 0 15 15" stroke="#8c8c8c">
        <path d="M0 15L15 0M4 15L15 4M8 15l7-7M12 15l3-3" />
    </svg>
);

const terminalTabs = [['История Счета', 96], ['Новости', 62], ['Алерты', 59], ['Почтовый ящик', 101], ['Эксперты', 70], ['Журнал', 60]];

function Toolbars() {
    return (
        <>
            <ToolRow $h={28}>
                <ToolBar>
                    <Grip />
                    <Tool><NewChartIcon /></Tool><Caret />
                    <Tool $ml={5}><ProfilesIcon /></Tool><Caret />
                    <Sep $l={7} $r={4} />
                    <Tool $pressed><WatchIcon /></Tool>
                    <Tool $ml={3}><TargetIcon /></Tool>
                    <Tool $ml={3} $pressed><NavigatorIcon /></Tool>
                    <Tool $ml={3} $pressed><TerminalIcon /></Tool>
                    <Tool $ml={3}><TesterIcon /></Tool>
                    <Sep $l={4} $r={5} />
                    <TextTool $w={106} $pl={4} $gap={5}><OrderIcon />Новый Ордер</TextTool>
                    <Tool><AlertIcon /></Tool>
                    <TextTool $w={94} $pl={5} $gap={6}><ExpertIcon stop />Советники</TextTool>
                </ToolBar>
                <ToolBar>
                    <Grip />
                    <Tool $ml={1}><BarsIcon /></Tool>
                    <Tool $ml={3} $pressed><CandleIcon /></Tool>
                    <Tool $ml={3}><LineIcon /></Tool>
                    <Sep />
                    <Tool><ZoomIcon plus /></Tool>
                    <Tool $ml={3}><ZoomIcon /></Tool>
                    <Sep />
                    <Tool $pressed><ScrollIcon /></Tool>
                    <Tool $ml={3}><ShiftIcon /></Tool>
                    <Sep />
                    <Tool $w={24}><IndicatorIcon /></Tool><Caret />
                    <Tool $w={24} $ml={6}><ClockIcon /></Tool><Caret />
                    <Tool $w={24} $ml={6}><TemplateIcon /></Tool><Caret />
                    <Tool $w={5} />
                </ToolBar>
                <Spacer />
                <NewsButton><NewsBadge>4</NewsBadge></NewsButton>
            </ToolRow>
            <ToolRow $h={26} $last>
                <ToolBar $last>
                    <Grip />
                    <Tool $ml={1} $w={26} $pressed><CursorIcon /></Tool>
                    <Tool $ml={2}><CrossIcon /></Tool>
                    <Sep />
                    <Tool><VLineIcon /></Tool>
                    <Tool $ml={3}><HLineIcon /></Tool>
                    <Tool $ml={3}><TrendIcon /></Tool>
                    <Tool $ml={3}><ChannelIcon /></Tool>
                    <Tool $ml={3}><FiboIcon /></Tool>
                    <Tool $ml={3}><Glyph>A</Glyph></Tool>
                    <Tool $ml={3}><LabelIcon /></Tool>
                    <Tool $ml={3}><ArrowsIcon /></Tool><Caret />
                    <Tool $w={4} />
                </ToolBar>
                <ToolBar $last>
                    <Grip />
                    {['M1', 'M5', 'M15', 'M30', 'H1', 'H4', 'D1', 'W1', 'MN'].map((t, i) => (
                        <Tool key={t} $ml={i ? 3 : 1} $pressed={t === 'H1'}>{t}</Tool>
                    ))}
                    <Tool $w={2} />
                </ToolBar>
            </ToolRow>
        </>
    );
}

function MarketWatch() {
    return (
        <Panel $h={371}>
            <PanelTitle><PanelName>Обзор рынка: 18:03:32</PanelName><Close /></PanelTitle>
            <Sheet>
                <QuoteTable>
                    <QuoteHead><div>Символ</div><div>Бид</div><div>Аск</div></QuoteHead>
                    {quotes.map(([symbol, bid, ask, up]) => (
                        <QuoteRow key={symbol}>
                            <QuoteCell $symbol><QuoteArrow up={up} />{symbol}</QuoteCell>
                            <QuoteCell $color={up ? '#00f' : '#f00'}>{bid}</QuoteCell>
                            <QuoteCell $color={up ? '#00f' : '#f00'} $last>{ask}</QuoteCell>
                        </QuoteRow>
                    ))}
                    <QuoteRow><QuoteCell $symbol><QuoteArrow /></QuoteCell><QuoteCell /><QuoteCell $last /></QuoteRow>
                </QuoteTable>
                <ScrollBar>
                    <Svg w={7} h={4}><path d="M0 4l3.500-4L7 4z" fill="#444" /></Svg>
                    <ScrollThumb><Svg w={7} h={8}><path d="M0 .5h7M0 3.500h7M0 6.500h7" stroke="#666" /></Svg></ScrollThumb>
                    <Svg w={7} h={4}><path d="M0 0l3.500 4L7 0z" fill="#444" /></Svg>
                </ScrollBar>
            </Sheet>
            <TabBar $h={23} $pl={3}>
                <Tab $w={65} $active>Символы</Tab>
                <Tab $w={104}>Тиковый график</Tab>
                <TabMark />
            </TabBar>
        </Panel>
    );
}

function Navigator() {
    return (
        <Panel $h={350}>
            <PanelTitle><PanelName>Навигатор</PanelName><Close /></PanelTitle>
            <Sheet>
                <Tree>
                    <TreeRow $root><TreeIcon $w={21}><MetaIcon /></TreeIcon><TreeText>MetaTrader - E-Global TFG</TreeText></TreeRow>
                    <TreeRow><Branch open /><TreeIcon $w={22}><AccountsIcon /></TreeIcon><TreeText>Счета</TreeText></TreeRow>
                    <TreeRow><Leaf /><TreeIcon $w={21} $pl={2}><AccountIcon /></TreeIcon><TreeText>2730664: Dmitry Naumov</TreeText></TreeRow>
                    <TreeRow><Leaf last /><TreeIcon $w={21} $pl={2}><AccountIcon /></TreeIcon><TreeText>2723094: Dmitry Naumov</TreeText></TreeRow>
                    <TreeRow><Branch /><TreeIcon $w={22} $pl={1}><FuncIcon /></TreeIcon><TreeText>Индикаторы</TreeText></TreeRow>
                    <TreeRow><Branch /><TreeIcon $w={22}><ExpertIcon /></TreeIcon><TreeText>Советники</TreeText></TreeRow>
                    <TreeRow><Branch /><TreeIcon $w={22} $pl={1}><FuncIcon coin /></TreeIcon><TreeText>Пользовательские Индикато</TreeText></TreeRow>
                    <TreeRow><Branch last /><TreeIcon $w={22} $pl={1}><ScriptIcon /></TreeIcon><TreeText>Скрипты</TreeText></TreeRow>
                </Tree>
            </Sheet>
            <TabBar $h={23} $pl={3}>
                <Tab $w={55} $active>Общие</Tab>
                <Tab $w={74}>Избранное</Tab>
                <TabMark />
            </TabBar>
        </Panel>
    );
}

function App() {
    return (
        <>
            <GlobalStyle />
            <Window>
                <TitleBar>
                    <AppIconBox><AppIcon /></AppIconBox>
                    <Caption>2723094: MetaTrader - E-Global Trade &amp; Finance Group - [GBPUSD,H1]</Caption>
                    <WinButtons>
                        <WinButton><Svg w={13} h={6}><rect x=".5" y=".5" width="12" height="4" fill="#fff" stroke="#4a4f5c" /></Svg></WinButton>
                        <WinButton><Svg w={13} h={11}><path d="M.5.500h12v10H.500zM4.500 4v3h4V4z" fill="#fff" stroke="#4a4f5c" fillRule="evenodd" /></Svg></WinButton>
                        <WinButton $close><Svg w={13} h={11}><path d="M2 1l9 9M11 1l-9 9" stroke="#4b3038" strokeWidth="4.500" /><path d="M2 1l9 9M11 1l-9 9" stroke="#fff" strokeWidth="2.800" /></Svg></WinButton>
                    </WinButtons>
                </TitleBar>
                <Body>
                    <Frame />
                    <Client>
                        <MenuBar>
                            <MenuItem $w={23}><MetaIcon /></MenuItem>
                            <MenuItem $w={47}><u>Ф</u>айл</MenuItem>
                            <MenuItem $w={37}><u>В</u>ид</MenuItem>
                            <MenuItem $w={60}>Вст<u>а</u>вка</MenuItem>
                            <MenuItem $w={61}><u>Г</u>рафики</MenuItem>
                            <MenuItem $w={55}>С<u>е</u>рвис</MenuItem>
                            <MenuItem $w={44}><u>О</u>кно</MenuItem>
                            <MenuItem $w={60}><u>С</u>правка</MenuItem>
                            <Spacer />
                            <MdiButton><Svg w={8} h={8}><path d="M1 6.500h6" stroke="#6b7d90" strokeWidth="2" /></Svg></MdiButton>
                            <MdiButton><Svg w={9} h={9}><path d="M2.500 3V.800h6v4.700H6M.500 3.500h5v5h-5zM.500 4.500h5M2.500 1.500h6" stroke="#6b7d90" /></Svg></MdiButton>
                            <MdiButton><Svg w={8} h={8}><path d="M1 1l6 6M7 1L1 7" stroke="#6b7d90" strokeWidth="2" /></Svg></MdiButton>
                        </MenuBar>
                        <Toolbars />
                        <Workspace>
                            <Dock>
                                <MarketWatch />
                                <Navigator />
                            </Dock>
                            <ChartPane>
                                <ChartView><Chart /></ChartView>
                                <TabBar $h={20} $pl={0}>
                                    <Tab $chart $w={82}>AUDUSD,H1</Tab><TabMark />
                                    <Tab $chart $w={80}>NZDCAD,H1</Tab><TabMark />
                                    <Tab $chart $w={80}>AUDUSD,H1</Tab><TabMark />
                                    <Tab $chart $w={80}>EURUSD,H1</Tab>
                                    <Tab $chart $w={80} $active>GBPUSD,H1</Tab>
                                    <Spacer />
                                    <Tab $w={36}><Svg w={22} h={7}><path d="M4 .5v6L.5 3.500zM18 .5v6l3.500-3z" fill="#999" /></Svg></Tab>
                                </TabBar>
                            </ChartPane>
                        </Workspace>
                        <Terminal>
                            <TerminalSide><Close /><TerminalName>Терминал</TerminalName></TerminalSide>
                            <TerminalMain>
                                <OrderHead>
                                    {columns.map(([name, w], i) => (
                                        <OrderCol key={i} $w={w} $first={i === 0}>
                                            {name}
                                            {i === 0 && <Svg w={7} h={7}><path d="M.5 6.500L3 .5" stroke="#808080" /><path d="M3.500.5L6 6.500H1" stroke="#e4e4e4" /></Svg>}
                                        </OrderCol>
                                    ))}
                                </OrderHead>
                                <BalanceRow>
                                    <Svg w={9} h={9}><circle cx="4.500" cy="4.500" r="3.500" fill="#ddd" stroke="#888" /><path d="M2 7l5-5" stroke="#888" /></Svg>
                                    Баланс: 0.89  Средства: 0.89  Свободно: 0.89
                                    <Profit>0.00</Profit>
                                </BalanceRow>
                                <OrderBody />
                                <TabBar $h={21} $pl={2}>
                                    <Tab $w={67} $active>Торговля</Tab>
                                    {terminalTabs.map(([name, w]) => [<Tab key={name} $w={w}>{name}</Tab>, <TabMark key={`${name}-mark`} />])}
                                </TabBar>
                            </TerminalMain>
                        </Terminal>
                        <StatusBar>
                            <StatusCell $first $w={484} $pl={2}>Для справки, нажмите F1</StatusCell>
                            <StatusCell $w={116}>Default</StatusCell>
                            <StatusCell $w={102} $num>2013.02.05 21:00</StatusCell>
                            <StatusCell $w={71} $num>O: 1.5661</StatusCell>
                            <StatusCell $w={71} $num>H: 1.5662</StatusCell>
                            <StatusCell $w={68} $num>L: 1.5653</StatusCell>
                            <StatusCell $w={70} $num>C: 1.5656</StatusCell>
                            <StatusCell $w={66} $num>V: 4435</StatusCell>
                            <StatusCell $w={147}><TrafficIcon />549/1 kb</StatusCell>
                            <Resize />
                        </StatusBar>
                    </Client>
                    <Frame $right />
                </Body>
                <BottomFrame />
            </Window>
        </>
    );
}

export default App;
